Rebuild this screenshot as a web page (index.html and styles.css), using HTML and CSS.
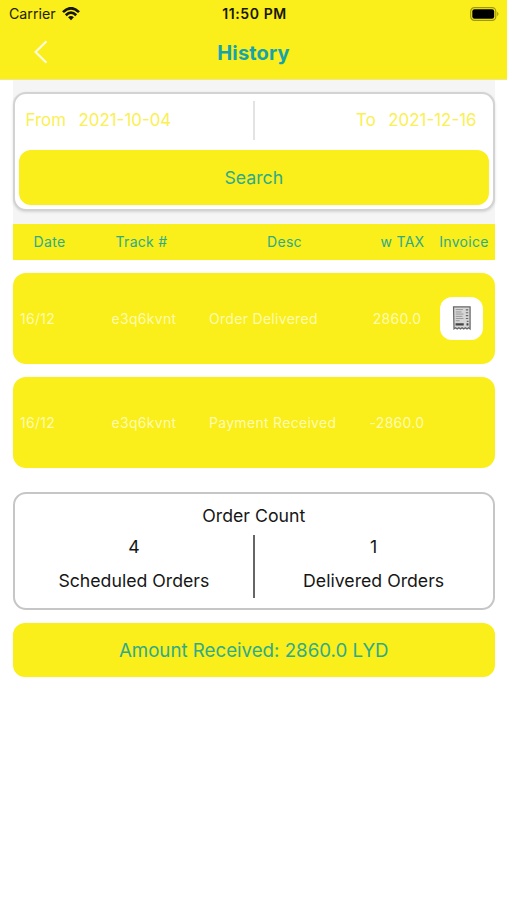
FILE: index.html
```html
<!DOCTYPE html>
<html lang="en">
<head>
<meta charset="utf-8">
<meta name="viewport" content="width=device-width, initial-scale=1">
<title>History</title>
<link rel="stylesheet" href="styles.css">
</head>
<body>
<header class="top">
  <div class="status">
    <div class="carrier"><span>Carrier</span>
      <svg class="wifi" width="18" height="14" viewBox="0 0 18 14" fill="none" stroke="#16160a" stroke-width="2.7"><path d="M1 5.1Q9-2.6 17 5.1M3.8 8.2Q9 3.2 14.2 8.2"/><path d="M6.1 10.3Q9 7.6 11.9 10.3L9 13.3Z" fill="#16160a" stroke="none"/></svg>
    </div>
    <span class="clock">11:50 PM</span>
    <svg class="battery" width="30" height="14" viewBox="0 0 30 14"><rect x=".7" y=".7" width="25.1" height="12.6" rx="3.7" fill="none" stroke="#9f980f" stroke-width="1.2"/><rect x="2.3" y="2.3" width="21.9" height="9.4" rx="2.2" fill="#000"/><path d="M27.2 4.8q2.5 2.2 0 4.4z" fill="#9f980f"/></svg>
  </div>
  <nav class="nav">
    <svg class="back" width="14" height="24" viewBox="0 0 14 24" fill="none" stroke="#fffde0" stroke-width="2.2"><path d="M12.5 1.3 1.5 12l11 10.7"/></svg>
    <h1>History</h1>
  </nav>
</header>
<main>
  <section class="filter">
    <div class="card">
      <div class="dates">
        <div class="range"><span>From</span><span>2021-10-04</span></div>
        <i class="rule"></i>
        <div class="range end"><span>To</span><span>2021-12-16</span></div>
      </div>
      <button class="search">Search</button>
    </div>
  </section>
  <div class="heads">
    <span>Date</span><span>Track #</span><span>Desc</span><span>w TAX</span><span>Invoice</span>
  </div>
  <div class="row">
    <span>16/12</span><span>e3q6kvnt</span><span>Order Delivered</span><span class="amt">2860.0</span>
    <span class="invoice"><svg width="20" height="25" viewBox="0 0 20 26"><path d="M1.2 1h17.2v22.8l-1.6-1.2-1.6 1.2-1.7-1.2-1.7 1.2-1.7-1.2-1.7 1.2-1.7-1.2-1.7 1.2-1.7-1.2-1.6 1.2z" fill="#d6d6d6" stroke="#666" stroke-width="1.3"/><path d="M3.5 3.7H11M3.5 6.2h6M3.5 8.4h8M3.5 10.8h7M3.5 13h8M3.5 15.3h4" stroke="#888" stroke-width=".8"/><path d="M14 4h2.5M14 7h2.5M14 10h2.5M14 13h2.5M15 16h1.8" stroke="#666" stroke-width="1.2"/><path d="M3.3 19h8.5M14.7 19h2" stroke="#444" stroke-width="2.3"/></svg></span>
  </div>
  <div class="row">
    <span>16/12</span><span>e3q6kvnt</span><span>Payment Received</span><span class="amt">-2860.0</span>
  </div>
  <section class="counts">
    <h2>Order Count</h2>
    <div class="split">
      <div class="count"><span>4</span><span>Scheduled Orders</span></div>
      <i class="bar"></i>
      <div class="count"><span>1</span><span>Delivered Orders</span></div>
    </div>
  </section>
  <div class="total">Amount Received: 2860.0 LYD</div>
</main>
</body>
</html>
```
FILE: styles.css
```css
* { box-sizing: border-box; }
body { margin: 0; background: #fff; color: #161616; font-family: Inter, "Liberation Sans", sans-serif; white-space: nowrap; }
h1, h2 { margin: 0; }
.top { height: 80px; background: #faee1b; border-bottom: 1px solid #eee78c; }
.status { height: 27px; display: grid; grid-template-columns: 1fr auto 1fr; align-items: center; padding: 0 7px 0 9px; }
.carrier { display: flex; align-items: center; gap: 6px; font-size: 14.2px; color: #222108; }
.clock { font-size: 14px; font-weight: 600; letter-spacing: .6px; color: #17170a; }
.battery { justify-self: end; }
.nav { height: 52px; display: grid; grid-template-columns: 1fr auto 1fr; align-items: center; padding: 0 34px 1px; }
.nav h1 { font-size: 20px; font-weight: 700; letter-spacing: .15px; color: #16a3a9; }
.back { position: relative; top: -1px; }
main { padding: 0 12.5px 0 13px; }
.filter { height: 144px; padding-top: 12px; background: #f5f5f6; }
.card { height: 119px; border: 2px solid #d3d3d3; border-radius: 13px; background: #fff; padding: 0 4px; box-shadow: 0 1px 3px #0002; }
.dates { height: 56px; display: grid; grid-template-columns: 1fr 2px 1fr; align-items: center; padding: 0 12px 3px 6.5px; font-size: 16.9px; color: #fbf052; }
.range { display: flex; gap: 12.5px; padding-bottom: 1px; }
.range.end { justify-content: flex-end; }
.rule { height: 39px; background: #e3e3e3; position: relative; left: 3px; }
.search { display: block; width: 100%; height: 55px; padding: 0; border: 0; border-radius: 12px; background: #faee1b; font: 17.7px Inter, sans-serif; color: #2fab88; }
.heads { height: 36px; display: grid; grid-template-columns: 73px 111px 175px 61px 62px; align-items: center; text-align: center; background: #faee1b; color: #2fab88; font-size: 14px; letter-spacing: .3px; padding-bottom: 1px; }
.row { height: 91px; margin-top: 13px; display: grid; grid-template-columns: 91.5px 97.5px 157px 74px 55px; align-items: center; padding-left: 7px; border-radius: 13px; background: #faee1b; color: #fffcb0; font-size: 14px; letter-spacing: .3px; }
.row > span:not(.invoice) { padding-bottom: 1px; }
.amt { text-align: center; padding-right: 12px; }
.invoice { width: 43px; height: 43px; border-radius: 12px; background: #fff; display: grid; place-items: center; }
.counts { height: 118px; margin-top: 24px; padding-top: 10px; border: 2px solid #c6c6c6; border-radius: 13px; font-size: 17.7px; }
.counts h2 { font-size: 17.7px; font-weight: 400; line-height: 24px; text-align: center; }
.split { display: grid; grid-template-columns: 1fr 2px 1fr; padding-top: 7px; }
.count { display: flex; flex-direction: column; align-items: center; line-height: 24px; gap: 10px; }
.bar { height: 63px; background: #666; }
.total { height: 54px; margin-top: 13px; border-radius: 12px; background: #faee1b; color: #2fab88; font-size: 18.7px; line-height: 55px; text-align: center; }
```
